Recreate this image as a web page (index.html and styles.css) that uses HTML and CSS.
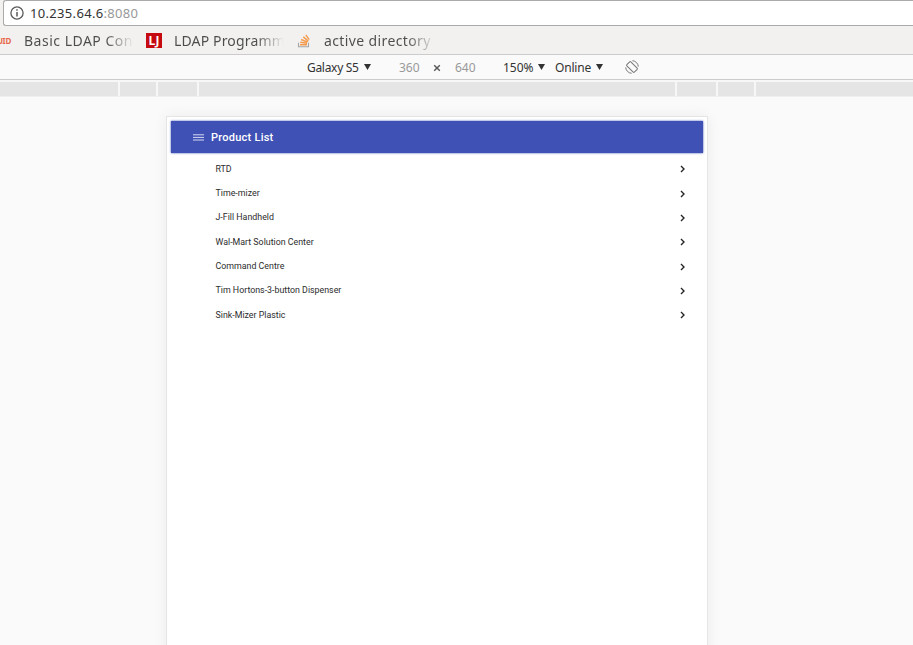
FILE: index.html
```html
<!DOCTYPE html>
<html lang="en">
<head>
<meta charset="utf-8">
<title>Product List</title>
<link rel="stylesheet" href="styles.css">
</head>
<body>
<div class="address-row">
  <div class="omnibox">
    <svg class="info" viewBox="0 0 14 14"><circle cx="7" cy="7" r="6.1" fill="none" stroke="#5a5a5a" stroke-width="1.3"/><path d="M7 6v4.5M7 3.3v1.5" stroke="#5a5a5a" stroke-width="1.5"/></svg>
    <span class="url">10.235.64.6<span class="port">:8080</span></span>
  </div>
</div>
<nav class="bookmarks">
  <span class="uid">UID</span>
  <span class="bookmark basic">Basic LDAP Con</span>
  <span class="lj">LJ</span>
  <span class="bookmark programm">LDAP Programm</span>
  <svg class="stack" viewBox="0 0 14 14"><path d="M1.5 8.8v4h10v-4" fill="none" stroke="#a5a5a5" stroke-width="1.1"/><path d="M3 10.8h7M3.2 8.3l6.9 1M4.2 5.5l6.3 2.6M6.3 2.9l5 4.2M8.8 .8l3.4 4.8" fill="none" stroke="#f49a4c" stroke-width="1.4"/></svg>
  <span class="bookmark active">active directory</span>
</nav>
<div class="device-bar">
  <span class="menu device">Galaxy S5</span><i class="arrow"></i>
  <span class="dimension wide">360</span>
  <svg class="times" viewBox="0 0 8 8"><path d="M1.2 1.2l5.6 5.6M6.8 1.2L1.2 6.8" stroke="#555" stroke-width="1.4"/></svg>
  <span class="dimension tall">640</span>
  <span class="menu scale">150%</span><i class="arrow"></i>
  <span class="menu online">Online</span><i class="arrow"></i>
  <svg class="rotate" viewBox="0 0 14 14" fill="none" stroke="#777" stroke-width="1"><rect x="4.2" y="1.7" width="5.6" height="10.6" rx=".8" transform="rotate(-45 7 7)"/><path d="M7.4 .7A6.3 6.3 0 0 1 13.3 6.6M6.6 13.3A6.3 6.3 0 0 1 .7 7.4"/></svg>
</div>
<div class="ruler"><i></i><i></i><i></i><i></i><i></i><i></i><i></i></div>
<main class="device-screen">
  <header class="app-bar">
    <svg viewBox="0 0 11 7"><path d="M0 .8h11M0 3.4h11M0 6h11" stroke="#d5d9f0" stroke-width="1"/></svg>
    <h1>Product List</h1>
  </header>
  <ul class="products">
    <li><span>RTD</span><svg viewBox="0 0 6 8"><path d="M1 1l3 3-3 3"/></svg></li>
    <li><span>Time-mizer</span><svg viewBox="0 0 6 8"><path d="M1 1l3 3-3 3"/></svg></li>
    <li><span>J-Fill Handheld</span><svg viewBox="0 0 6 8"><path d="M1 1l3 3-3 3"/></svg></li>
    <li><span>Wal-Mart Solution Center</span><svg viewBox="0 0 6 8"><path d="M1 1l3 3-3 3"/></svg></li>
    <li><span>Command Centre</span><svg viewBox="0 0 6 8"><path d="M1 1l3 3-3 3"/></svg></li>
    <li><span>Tim Hortons-3-button Dispenser</span><svg viewBox="0 0 6 8"><path d="M1 1l3 3-3 3"/></svg></li>
    <li><span>Sink-Mizer Plastic</span><svg viewBox="0 0 6 8"><path d="M1 1l3 3-3 3"/></svg></li>
  </ul>
</main>
</body>
</html>
```
FILE: styles.css
```css
* { box-sizing: border-box; }
body { margin: 0; width: 913px; height: 645px; overflow: hidden; background: #fafafa; font-family: "Noto Sans", sans-serif; display: flex; flex-direction: column; }
svg { display: block; flex: none; }
.address-row { height: 26px; flex: none; padding-left: 3px; background: #f2f1f0; }
.omnibox { height: 26px; border: 1px solid #aaa; border-right: 0; border-radius: 3px 0 0 3px; background: #fff; display: flex; align-items: center; padding-left: 6px; }
.info { width: 14px; height: 14px; }
.url { margin-left: 6px; font-size: 13px; letter-spacing: .32px; color: #333; white-space: nowrap; }
.port { color: #999; }
.bookmarks { height: 29px; flex: none; background: #f2f1f0; border-bottom: 1px solid #ccc; display: flex; align-items: center; padding-top: 1px; color: #4c4c4c; font-size: 14px; }
.uid { width: 15px; margin: 0 13px 0 -4px; flex: none; font-size: 8px; font-weight: 700; letter-spacing: -.3px; color: #e8674a; display: flex; justify-content: flex-end; }
.bookmark { white-space: nowrap; overflow: hidden; flex: none; line-height: 22px; background: linear-gradient(90deg, #4c4c4c 74%, #f2f1f0 100%); -webkit-background-clip: text; background-clip: text; color: transparent; letter-spacing: .38px; }
.basic { width: 110px; letter-spacing: .5px; }
.lj { width: 16px; height: 15px; margin: 0 12px; background: #c50a10; color: #fff; font: 700 12px/15px "Open Sans", sans-serif; text-align: center; }
.programm { width: 110px; letter-spacing: .15px; }
.stack { width: 14px; height: 14px; margin: 0 13px 0 13px; }
.active { width: 112px; }
.device-bar { height: 25px; flex: none; border-bottom: 1px solid #ccc; padding-left: 307px; display: flex; align-items: center; font-size: 12px; color: #333; }
.menu, .dimension { white-space: nowrap; flex: none; }
.device { width: 57px; letter-spacing: -.3px; }
.arrow { flex: none; width: 7px; height: 6px; background: #333; clip-path: polygon(0 0, 100% 0, 50% 100%); }
.dimension { color: #999; width: 21px; }
.wide { margin-left: 28px; }
.times { width: 8px; height: 8px; margin: 1px 14px 0 13px; }
.scale { width: 35px; margin-left: 27px; }
.online { width: 41px; margin-left: 10px; letter-spacing: -.2px; }
.rotate { width: 14px; height: 14px; margin-left: 22px; }
.ruler { height: 17px; flex: none; padding-top: 2px; background: #f7f7f7; display: grid; grid-template-columns: 118px 36px 39px 476px 39px 36px 1fr; column-gap: 2px; border-bottom: 1px solid #f0f0f0; }
.ruler i { background: #e5e5e5; }
.device-screen { width: 542px; height: 560px; flex: none; margin: 19px 0 0 166px; padding: 4px; border: 1px solid #e5e5e5; background: #fff; box-shadow: 0 0 14px rgba(0,0,0,.06); font-family: Roboto, sans-serif; }
.app-bar { height: 32px; background: #3f51b5; box-shadow: 0 0 2px #3f51b5; display: flex; align-items: center; padding-left: 22px; }
.app-bar svg { width: 11px; height: 7px; }
h1 { margin: 0 0 0 7px; font-size: 11px; font-weight: 500; letter-spacing: .25px; color: #fff; }
.products { list-style: none; margin: 3.5px 0 0; padding: 0 17px 0 44.5px; }
.products li { height: 24.35px; display: flex; align-items: center; justify-content: space-between; font-size: 8.83px; color: #2c2c2c; }
.products svg { width: 6px; height: 8px; margin-top: 1px; fill: none; stroke: #222; stroke-width: 1.35; }
```
